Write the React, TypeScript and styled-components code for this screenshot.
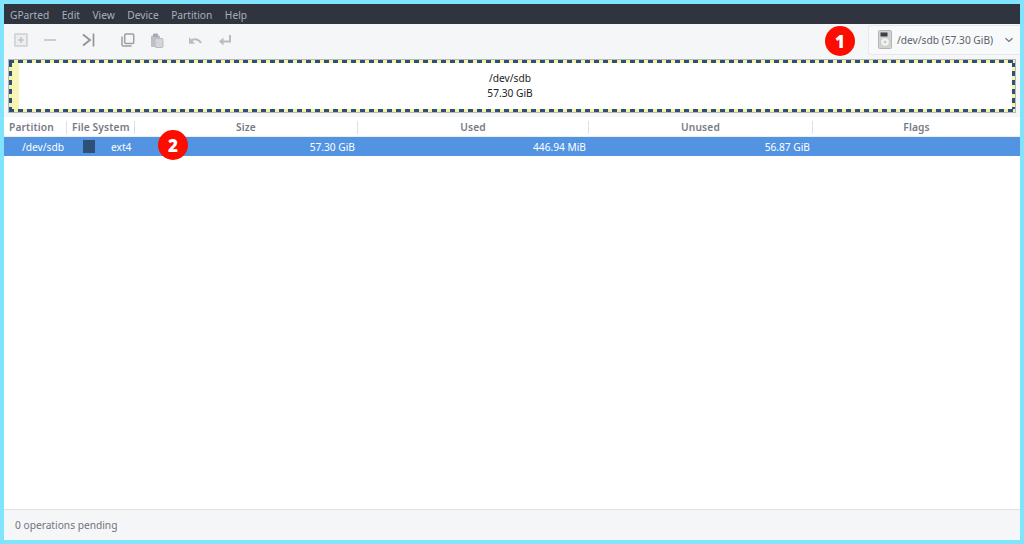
import React from "react";
import styled, { createGlobalStyle } from "styled-components";

const Global = createGlobalStyle`
  html, body { margin: 0; padding: 0; background: #7fe3ff; }
  * { box-sizing: border-box; }
`;

const Frame = styled.div`
  position: relative;
  width: 1024px;
  height: 544px;
  border: 4px solid #80e4ff;
  display: flex;
  flex-direction: column;
  background: #fff;
  font-family: "Noto Sans", sans-serif;
  font-size: 10.2px;
  color: #5c616c;
  overflow: hidden;
`;

const MenuBar = styled.div`
  height: 20px;
  background: #2f343f;
  display: flex;
  align-items: center;
  padding: 1px 0 0 6px;
  gap: 12.5px;
  color: #aab0bb;
  flex: none;
`;

const Toolbar = styled.div`
  height: 31px;
  background: #f5f6f7;
  display: flex;
  align-items: center;
  flex: none;
  padding-left: 10px;
  position: relative;
`;

const Tool = styled.span<{ $w: number }>`
  width: ${(p) => p.$w}px;
  height: 14px;
  flex: none;
  display: flex;
  svg { display: block; }
`;

const Combo = styled.div`
  margin-left: auto;
  width: 152px;
  height: 30px;
  background: #f8f9fa;
  border: 1px solid #e6e8ec;
  border-right: none;
  border-radius: 3px 0 0 3px;
  display: flex;
  align-items: center;
  padding: 0 6px 0 9px;
  gap: 5px;
  color: #5c616c;
`;

const ComboText = styled.span`
  flex: 1;
  white-space: nowrap;
`;

const GraphArea = styled.div`
  height: 62px;
  flex: none;
  background: #f5f6f7;
  padding: 4px 4px 4px 4px;
  display: flex;
`;

const dash = (dir: string) =>
  `repeating-linear-gradient(${dir}, #2e4f78 0 5px, #f6f3a0 5px 9px)`;

const Disk = styled.div`
  flex: 1;
  border: 1px solid #b4b8bc;
  padding: 3px;
  display: flex;
  background-color: #fff;
  background-image: ${dash("90deg")}, ${dash("90deg")}, ${dash("0deg")}, ${dash("0deg")};
  background-size: 100% 3px, 100% 3px, 3px 100%, 3px 100%;
  background-position: 0 0, 0 100%, 0 0, 100% 0;
  background-repeat: no-repeat;
`;

const Used = styled.div`
  width: 7px;
  flex: none;
  background: #f8f6b4;
`;

const DiskLabel = styled.div`
  flex: 1;
  display: flex;
  flex-direction: column;
  align-items: center;
  justify-content: center;
  color: #222;
  line-height: 15px;
  padding-right: 11px;
  background: #fff;
`;

const cols = "63px 68px 223px 231px 224px 1fr";

const HeaderRow = styled.div`
  display: grid;
  grid-template-columns: ${cols};
  height: 20px;
  padding-top: 2px;
  flex: none;
  background: #fff;
  border-bottom: 1px solid #eceef0;
  align-items: center;
  font-weight: 600;
  color: #767b85;
`;

const HeaderCell = styled.div<{ $center?: boolean }>`
  height: 13px;
  line-height: 13px;
  white-space: nowrap;
  padding-left: ${(p) => (p.$center ? 0 : 5)}px;
  text-align: ${(p) => (p.$center ? "center" : "left")};
  border-right: 1px solid #dcdfe3;
  letter-spacing: 0.15px;
  &:last-child { border-right: none; }
`;

const Row = styled.div`
  display: grid;
  grid-template-columns: ${cols};
  height: 19px;
  flex: none;
  background: #5294e2;
  color: #fff;
  align-items: center;
`;

const Cell = styled.div<{ $right?: boolean }>`
  text-align: ${(p) => (p.$right ? "right" : "left")};
  padding: ${(p) => (p.$right ? "0 3px 0 0" : "0 0 0 18px")};
  white-space: nowrap;
`;

const FsCell = styled.div`
  display: flex;
  align-items: center;
  padding-left: 16px;
  gap: 16px;
  white-space: nowrap;
`;

const Swatch = styled.span`
  width: 12px;
  height: 13px;
  background: #2e4f78;
  flex: none;
`;

const Body = styled.div`
  flex: 1;
  background: #fff;
`;

const Status = styled.div`
  height: 31px;
  flex: none;
  background: #f5f6f7;
  border-top: 1px solid #dfe1e4;
  display: flex;
  align-items: center;
  padding-left: 11px;
  color: #6f747e;
`;

const Badge = styled.div<{ $x: number; $y: number }>`
  position: absolute;
  left: ${(p) => p.$x}px;
  top: ${(p) => p.$y}px;
  width: 30px;
  height: 30px;
  border-radius: 50%;
  background: #fc0d00;
  color: #fff;
  display: flex;
  align-items: center;
  justify-content: center;
  font-family: "Open Sans", "Noto Sans", sans-serif;
  font-weight: 800;
  font-size: 17px;
`;

const g = "#b9bcc1";

const Icons = {
  add: (
    <svg width="14" height="14" viewBox="0 0 14 14" fill="none" stroke="#c4c7cb">
      <rect x="1" y="1" width="12" height="12" fill="#eceef0" strokeWidth="1.2" />
      <path d="M7 4v6M4 7h6" strokeWidth="1.2" stroke="#b4b7bc" />
    </svg>
  ),
  minus: (
    <svg width="14" height="14" viewBox="0 0 14 14" fill="none" stroke={g}>
      <path d="M1 7h12" strokeWidth="1.4" />
    </svg>
  ),
  end: (
    <svg width="14" height="14" viewBox="0 0 14 14" fill="none" stroke="#8e9299">
      <path d="M1 1.5 8 7l-7 5.5" strokeWidth="1.8" />
      <path d="M11.5 0.5v13" strokeWidth="1.6" />
    </svg>
  ),
  copy: (
    <svg width="14" height="14" viewBox="0 0 14 14" fill="none" stroke="#9c9fa5">
      <rect x="3.7" y="1" width="9" height="9.5" rx="1" strokeWidth="1.5" />
      <path d="M1 3.5V12a1 1 0 0 0 1 1h8.5" strokeWidth="1.5" />
    </svg>
  ),
  paste: (
    <svg width="14" height="15" viewBox="0 0 14 15">
      <path d="M1 3.5A1 1 0 0 1 2 2.5h7a1 1 0 0 1 1 1V14H2a1 1 0 0 1-1-1z" fill="#bcbfc4" />
      <rect x="3" y="0.5" width="5" height="3.5" rx="1" fill="#a6a9af" />
      <rect x="5" y="5.5" width="8" height="9" rx="1" fill="#d3d5d9" stroke="#b9bcc1" />
    </svg>
  ),
  undo: (
    <svg width="14" height="14" viewBox="0 0 14 14" fill="none" stroke={g}>
      <path d="M13 10C11 6.5 7 5 3.5 7.5" strokeWidth="2.2" />
      <path d="M1 4v6.7h6z" fill={g} stroke="none" />
    </svg>
  ),
  enter: (
    <svg width="14" height="14" viewBox="0 0 14 14" fill="none" stroke={g}>
      <path d="M12 2v6.5H4" strokeWidth="2" />
      <path d="M5.5 4.5 1 8.5l4.5 4z" fill={g} stroke="none" />
    </svg>
  ),
  disk: (
    <svg width="14" height="19" viewBox="0 0 14 19">
      <rect x="0.5" y="0.5" width="13" height="18" rx="1" fill="#d3d4d0" stroke="#b4b5b1" />
      <rect x="2.5" y="2.5" width="7" height="4" fill="#3d4147" />
      <circle cx="7" cy="12" r="4.6" fill="#f0f0ee" stroke="#c9cac6" />
      <circle cx="7" cy="12" r="1.2" fill="#c5c6c2" />
    </svg>
  ),
  chevron: (
    <svg width="10" height="10" viewBox="0 0 10 10" fill="none" stroke="#6f747e">
      <path d="M1.5 3.2 5 6.5l3.5-3.3" strokeWidth="1.2" />
    </svg>
  ),
};

const menus = ["GParted", "Edit", "View", "Device", "Partition", "Help"];

const tools: [keyof typeof Icons, number][] = [
  ["add", 29],
  ["minus", 39],
  ["end", 39],
  ["copy", 29],
  ["paste", 38],
  ["undo", 30],
  ["enter", 30],
];

export default function App() {
  return (
    <Frame>
      <Global />
      <MenuBar>
        {menus.map((m) => (
          <span key={m}>{m}</span>
        ))}
      </MenuBar>
      <Toolbar>
        {tools.map(([k, w]) => (
          <Tool key={k} $w={w}>
            {Icons[k]}
          </Tool>
        ))}
        <Combo>
          {Icons.disk}
          <ComboText>/dev/sdb (57.30 GiB)</ComboText>
          {Icons.chevron}
        </Combo>
      </Toolbar>
      <GraphArea>
        <Disk>
          <Used />
          <DiskLabel>
            <span>/dev/sdb</span>
            <span>57.30 GiB</span>
          </DiskLabel>
        </Disk>
      </GraphArea>
      <HeaderRow>
        <HeaderCell>Partition</HeaderCell>
        <HeaderCell>File System</HeaderCell>
        <HeaderCell $center>Size</HeaderCell>
        <HeaderCell $center>Used</HeaderCell>
        <HeaderCell $center>Unused</HeaderCell>
        <HeaderCell $center>Flags</HeaderCell>
      </HeaderRow>
      <Row>
        <Cell>/dev/sdb</Cell>
        <FsCell>
          <Swatch />
          <span>ext4</span>
        </FsCell>
        <Cell $right>57.30 GiB</Cell>
        <Cell $right>446.94 MiB</Cell>
        <Cell $right>56.87 GiB</Cell>
        <Cell />
      </Row>
      <Body />
      <Status>0 operations pending</Status>
      <Badge $x={821} $y={22}>1</Badge>
      <Badge $x={154} $y={126}>2</Badge>
    </Frame>
  );
}
